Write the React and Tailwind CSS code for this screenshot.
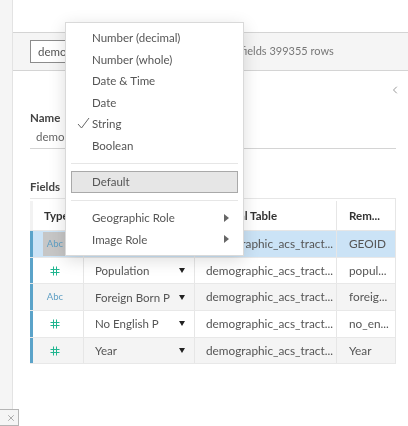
import { ChevronLeft, X } from "lucide-react";

const rows = [
  { type: "abc", name: "", remote: "GEOID", selected: true },
  { type: "num", name: "Population", remote: "popul..." },
  { type: "abc", name: "Foreign Born P", remote: "foreig...", alt: true },
  { type: "num", name: "No English P", remote: "no_en..." },
  { type: "num", name: "Year", remote: "Year", alt: true },
];

const typeItems = ["Number (decimal)", "Number (whole)", "Date & Time", "Date", "String", "Boolean"];

function HashIcon() {
  return (
    <svg width="10" height="10" viewBox="0 0 10 10" stroke="#1fb58f" strokeWidth="1" fill="none">
      <path d="M3.5 0.5V9.5M6.5 0.5V9.5M0.5 3.5H9.5M0.5 6.5H9.5" />
    </svg>
  );
}

function Row({ row }) {
  const bg = row.selected ? "bg-[#cbe3f6]" : row.alt ? "bg-[#f4f4f4]" : "bg-white";
  return (
    <div className={`flex h-[26.7px] border-b border-[#e8e8e8] text-[11.8px] text-[#555] ${bg}`}>
      <div className="w-[3px] shrink-0 bg-[#5ba3c9]" />
      <div className="w-[51px] shrink-0 flex items-center justify-center border-r border-[#e6e6e6] pr-[6px]">
        {row.type === "abc" ? (
          <span className={`text-[9.5px] text-[#5f9fc4] ${row.selected ? "bg-[#c6c6c6] px-[4px] py-[5px]" : ""}`}>Abc</span>
        ) : (
          <HashIcon />
        )}
      </div>
      <div className="w-[111px] shrink-0 flex items-center justify-between border-r border-[#e6e6e6] pl-[11px] pr-[9px]">
        <span className="text-[11.5px]">{row.name}</span>
        <span className="w-0 h-0 border-x-[3.5px] border-x-transparent border-t-[5px] border-t-[#222]" />
      </div>
      <div className="w-[142px] shrink-0 flex items-center border-r border-[#e6e6e6] pl-[11px]">
        <span className="whitespace-nowrap">demographic_acs_tract...</span>
      </div>
      <div className="flex-1 flex items-center pl-[12px]">{row.remote}</div>
    </div>
  );
}

function TypeMenu() {
  return (
    <div className="absolute left-[65px] top-[22px] w-[179px] h-[234px] bg-white border border-[#d9d9d9] shadow-[0_4px_16px_rgba(0,0,0,0.14)] text-[11.5px] text-[#555] pt-[4px]">
      {typeItems.map((item) => (
        <div key={item} className="relative h-[21.5px] flex items-center pl-[26px]">
          {item === "String" && (
            <svg className="absolute left-[11px] top-[4px]" width="13" height="12" viewBox="0 0 13 12" fill="none" stroke="#666" strokeWidth="1">
              <path d="M1 7L4.5 11L12 1" />
            </svg>
          )}
          {item}
        </div>
      ))}
      <div className="mx-[5px] mt-[7px] border-t border-[#e6e6e6]" />
      <div className="mx-[5px] mt-[7px] h-[22px] flex items-center pl-[20px] bg-[#e6e6e6] border border-[#a9a9a9]">Default</div>
      <div className="mx-[5px] mt-[7px] border-t border-[#e6e6e6]" />
      <div className="mt-[6px]">
        {["Geographic Role", "Image Role"].map((item) => (
          <div key={item} className="h-[21.5px] flex items-center justify-between pl-[26px] pr-[14px]">
            <span>{item}</span>
            <span className="w-0 h-0 border-y-[4px] border-y-transparent border-l-[5px] border-l-[#666]" />
          </div>
        ))}
      </div>
    </div>
  );
}

export default function App() {
  return (
    <div className="relative flex h-[426px] w-[408px] overflow-hidden bg-white font-['Lato',sans-serif] blur-[0.5px]">
      {/* Left strip */}
      <div className="w-[13px] shrink-0 bg-[#f5f5f5] border-r border-[#e3e3e3]" />

      <div className="flex-1 flex flex-col pt-[32px]">
        {/* Connection bar */}
        <div className="h-[39px] flex items-center bg-[#f5f5f5] border-y border-[#d4d4d4] pl-[17px] text-[11.5px] text-[#666]">
          <div className="w-[100px] h-[23px] flex items-center bg-white border border-[#8c8c8c] pl-[7px] text-[#555]">demo</div>
          <span className="ml-[111px] text-[11px] text-[#777]">fields 399355 rows</span>
        </div>

        <div className="relative flex-1 pl-[17px] pr-[12px]">
          <ChevronLeft className="absolute right-[7px] top-[13px] text-[#777]" size={12} strokeWidth={1.5} />
          <div className="pt-[39px] text-[11.5px] font-bold text-[#444] leading-[15px]">Name</div>
          <div className="mt-[3px] h-[21px] border-b border-[#d4d4d4] pl-[6px] text-[11.5px] text-[#666]">demo</div>
          <div className="mt-[30px] text-[11.5px] font-bold text-[#444] leading-[15px]">Fields</div>

          {/* Fields table */}
          <div className="mt-[4px] border-r border-[#e6e6e6] w-[366px]">
            <div className="flex h-[33px] pt-[2px] border-y border-[#e6e6e6] text-[11.5px] font-bold text-[#333]">
              <div className="w-[3px] shrink-0 bg-[#f2f2f2]" />
              <div className="w-[51px] shrink-0 flex items-center pl-[11px] border-r border-[#e6e6e6]">Type</div>
              <div className="w-[111px] shrink-0 border-r border-[#e6e6e6]" />
              <div className="w-[142px] shrink-0 flex items-center pl-[11px] border-r border-[#e6e6e6]">Physical Table</div>
              <div className="flex-1 flex items-center pl-[12px]">Rem...</div>
            </div>
            {rows.map((row, i) => (
              <Row key={i} row={row} />
            ))}
          </div>
        </div>
      </div>

      {/* Close tab */}
      <div className="absolute left-0 bottom-0 w-[19px] h-[17px] flex items-center justify-end pr-[2px] bg-[#f5f5f5] border border-l-0 border-[#b5b5b5]">
        <X size={10} strokeWidth={1.25} className="text-[#666]" />
      </div>

      <TypeMenu />
    </div>
  );
}
